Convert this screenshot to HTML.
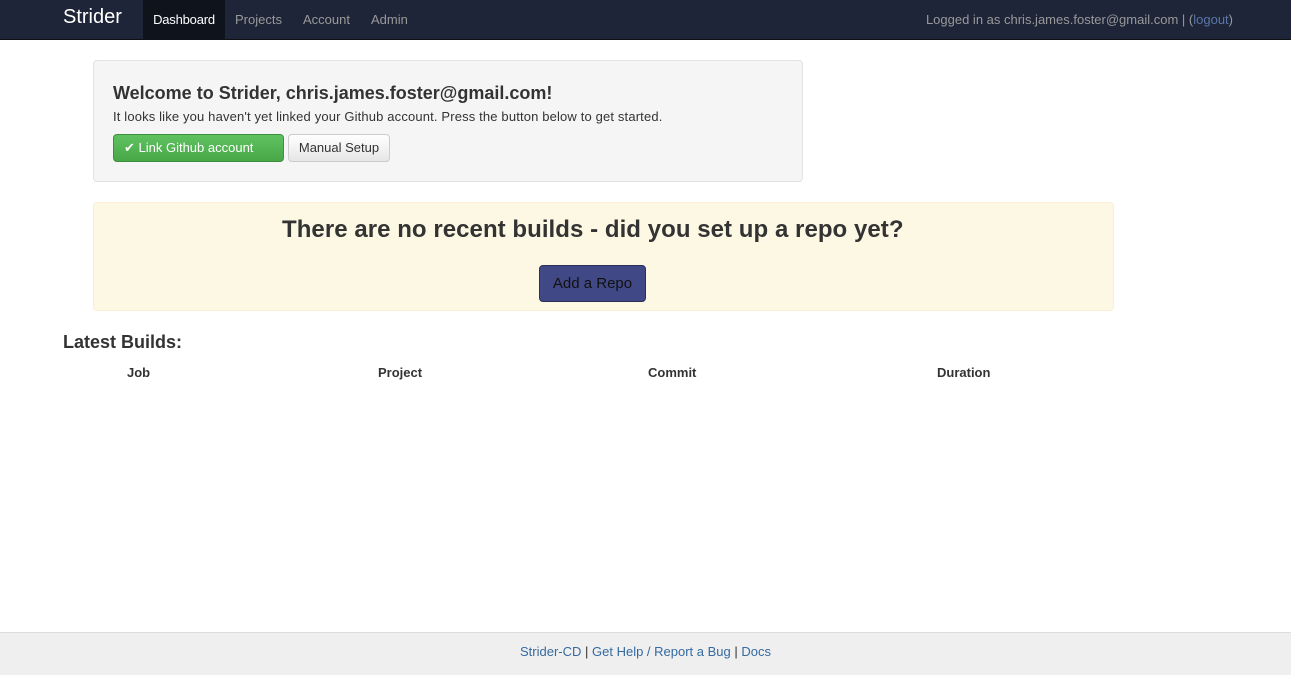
<!DOCTYPE html>
<html><head><style>
*{box-sizing:border-box}
body{margin:0;width:1291px;height:675px;position:relative;font-family:"Liberation Sans",sans-serif;color:#333;background:#fff;overflow:hidden}
.nav{position:absolute;top:0;left:0;width:1291px;height:40px;background:#1e2538;border-bottom:1px solid #111}
.nav .brand{position:absolute;left:63px;top:6px;font-size:20px;color:#fff}
.nav a{position:absolute;top:0;height:40px;line-height:40px;font-size:13px;color:#999;text-decoration:none}
.nav .act{background:#0f131c;color:#fff;width:82px;text-align:center;left:143px;letter-spacing:-0.2px}
.nav .right{position:absolute;right:58px;top:12px;font-size:13px;color:#999}
.well{position:absolute;left:93px;top:60px;width:710px;height:122px;background:#f5f5f5;border:1px solid #e3e3e3;border-radius:4px}
.well h3{position:absolute;left:19px;top:22px;margin:0;font-size:18px;font-weight:bold}
.well p{position:absolute;left:19px;top:48px;margin:0;font-size:13px;letter-spacing:0.15px}
.btn{position:absolute;font-size:13px;border-radius:4px;line-height:26px;text-align:center}
.alert{position:absolute;left:93px;top:202px;width:1021px;height:109px;background:#fcf8e3;border:1px solid #fbeed5;border-radius:4px}
.alert h2{margin:0;position:absolute;left:188px;top:13px;white-space:nowrap;font-size:24px;font-weight:bold;letter-spacing:0.05px}
h4{position:absolute;left:63px;top:332px;margin:0;font-size:18px}
.th{position:absolute;top:365px;font-size:13px;font-weight:bold}
.foot{position:absolute;left:0;top:632px;width:1291px;height:43px;background:#efefef;border-top:1px solid #ddd;text-align:center;line-height:38px;font-size:13px;color:#333}
.foot a{color:#356aa0;text-decoration:none}
</style></head><body>
<div class="nav"><span class="brand">Strider</span>
<a class="act">Dashboard</a><a style="left:235px">Projects</a><a style="left:303px">Account</a><a style="left:371px">Admin</a>
<span class="right">Logged in as chris.james.foster@gmail.com | (<span style="color:#5a76a8">logout</span>)</span></div>
<div class="well"><h3>Welcome to Strider, chris.james.foster@gmail.com!</h3>
<p>It looks like you haven't yet linked your Github account. Press the button below to get started.</p>
<div class="btn" style="left:19px;top:73px;width:171px;height:28px;background:linear-gradient(#5fc15f,#48a848);border:1px solid #3d8f3d;color:#fff;text-align:left;padding-left:10px">✔ Link Github account</div>
<div class="btn" style="left:194px;top:73px;width:102px;height:28px;background:linear-gradient(#fff,#e6e6e6);border:1px solid #ccc;color:#333">Manual Setup</div></div>
<div class="alert"><h2>There are no recent builds - did you set up a repo yet?</h2>
<div class="btn" style="left:445px;top:62px;width:107px;height:37px;line-height:36px;font-size:15px;background:#414886;border:1px solid #2a2f5a;color:#111">Add a Repo</div></div>
<h4>Latest Builds:</h4>
<span class="th" style="left:127px">Job</span><span class="th" style="left:378px">Project</span><span class="th" style="left:648px">Commit</span><span class="th" style="left:937px">Duration</span>
<div class="foot"><a>Strider-CD</a> | <a>Get Help / Report a Bug</a> | <a>Docs</a></div>
</body></html>
